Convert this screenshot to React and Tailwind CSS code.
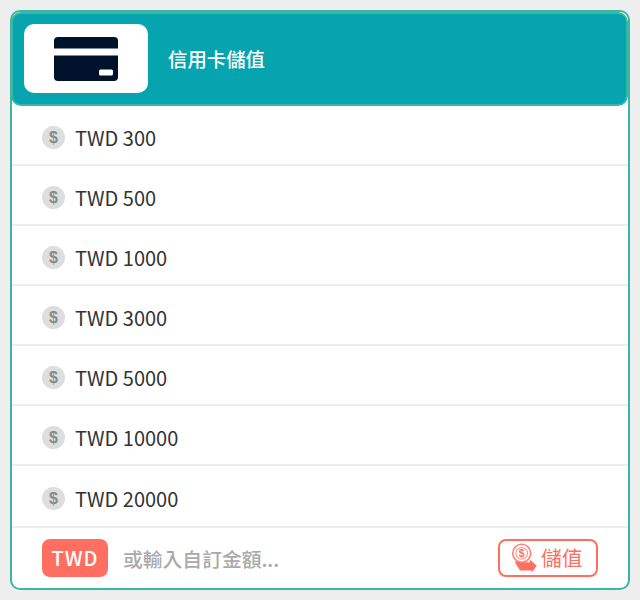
import React from "react";

const FONT = { fontFamily: '"Noto Sans CJK TC", "Noto Sans", sans-serif' };
const amounts = [300, 500, 1000, 3000, 5000, 10000, 20000];

function Card() {
  return (
    <svg width="64" height="44" viewBox="0 0 64 44">
      <path d="M4 0H60a4 4 0 0 1 4 4V11.5H0V4a4 4 0 0 1 4-4Z" fill="#00112c" />
      <path d="M0 18.5H64V40a4 4 0 0 1-4 4H4a4 4 0 0 1-4-4Z" fill="#00112c" />
      <rect x="45" y="32.5" width="14" height="6" rx="1.5" fill="#fff" />
    </svg>
  );
}

function Coin() {
  return (
    <div className="w-[23px] h-[23px] -mt-px rounded-full bg-[#dedede] flex items-center justify-center text-[#8a8a8a] text-[16px] font-bold leading-none shrink-0" style={{ fontFamily: '"Liberation Sans", sans-serif' }}>
      $
    </div>
  );
}

function Charge() {
  return (
    <svg width="27" height="32" viewBox="511 543 27 32" fill="none" className="shrink-0">
      <path d="M514.5 562.5 L530 563.5 V560.7 L536.8 566.7 L531.7 573.5 V571.5 H520 Z" fill="#ff6f61" />
      <circle cx="521.7" cy="554.3" r="9" stroke="#ff8378" strokeWidth="1.6" fill="#fff" />
      <circle cx="521.7" cy="554.3" r="5.8" stroke="#ff9a90" strokeWidth="1.2" />
      <text x="521.7" y="558" textAnchor="middle" fontSize="10.5" fontWeight="700" fill="#ff6f61" fontFamily="Liberation Sans">$</text>
    </svg>
  );
}

export default function App() {
  return (
    <div className="w-[640px] h-[600px] bg-[#eeeeee] p-2.5" style={FONT}>
      <div className="w-[620px] h-[580px] bg-white border-2 border-[#38b8a4] rounded-[10px] flex flex-col">
        <div className="h-[94px] shrink-0 bg-[#05a4ae] border-2 border-[#38b8a4] rounded-[10px] flex items-center pl-[11px] -ml-px">
          <div className="w-[124px] h-[69px] mb-px bg-white rounded-[10px] flex items-center justify-center shrink-0">
            <Card />
          </div>
          <div className="ml-5 text-white text-[19.4px] font-medium">信用卡儲值</div>
        </div>
        <div className="shrink-0 flex flex-col">
          {amounts.map((a) => (
            <div key={a} className="h-[60px] last:h-[62px] pt-[6px] border-b-2 border-[#eeeeee] flex items-center pl-[30px] gap-[10px] text-[#333333] text-xl">
              <Coin />
              <span>TWD {a}</span>
            </div>
          ))}
        </div>
        <div className="flex-1 flex items-center pl-[30px] pr-[30px]">
          <div className="w-[66px] h-[38px] rounded-lg bg-[#ff6f61] text-white text-xl font-medium flex items-center justify-center tracking-wider">TWD</div>
          <div className="ml-[15px] pt-[2px] text-[#aaaaaa] text-[19.8px] font-medium">或輸入自訂金額...</div>
          <div className="ml-auto w-[100px] h-[38px] border-2 border-[#ff6f61] rounded-lg flex items-center pl-[11px] gap-[3px] text-[#ff6f61] text-[20.8px]">
            <Charge />
            <span>儲值</span>
          </div>
        </div>
      </div>
    </div>
  );
}
